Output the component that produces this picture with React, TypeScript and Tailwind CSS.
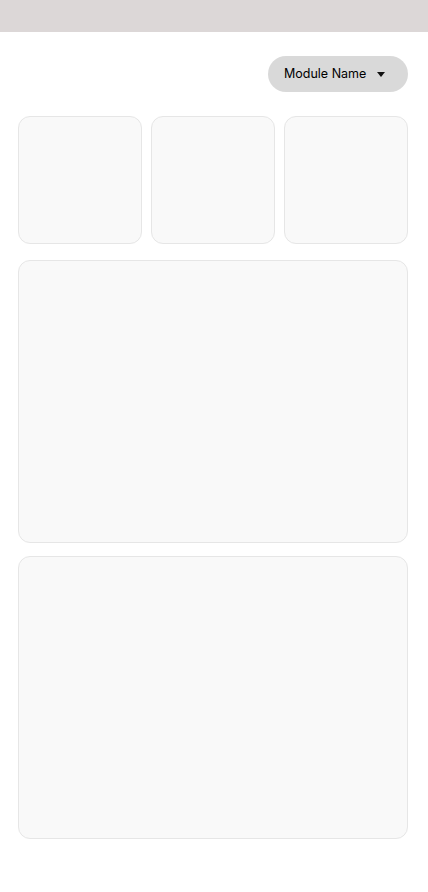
export default function App() {
  return (
    <div className="min-h-screen bg-white" style={{ fontFamily: 'Inter, "Liberation Sans", sans-serif' }}>
      <div className="h-8 bg-[#dcd7d7]" />
      <div className="pl-[18px] pr-5 pt-6 pb-8">
        <div className="flex justify-end">
          <button className="flex h-9 w-[140px] items-center rounded-full bg-[#d9d9d9] pl-4 pr-[23px] text-[12.5px] text-black">
            <span>Module Name</span>
            <svg className="ml-auto" width="8" height="5" viewBox="0 0 8 5">
              <path d="M0 0h8L4 5z" fill="#111" />
            </svg>
          </button>
        </div>
        <div className="mt-6 grid grid-cols-3 gap-[9px]">
          <div className="h-[128px] rounded-xl border border-[#e6e6e6] bg-[#f9f9f9]" />
          <div className="h-[128px] rounded-xl border border-[#e6e6e6] bg-[#f9f9f9]" />
          <div className="h-[128px] rounded-xl border border-[#e6e6e6] bg-[#f9f9f9]" />
        </div>
        <div className="mt-4 h-[283px] rounded-xl border border-[#e6e6e6] bg-[#f9f9f9]" />
        <div className="mt-[13px] h-[283px] rounded-xl border border-[#e6e6e6] bg-[#f9f9f9]" />
      </div>
    </div>
  );
}
